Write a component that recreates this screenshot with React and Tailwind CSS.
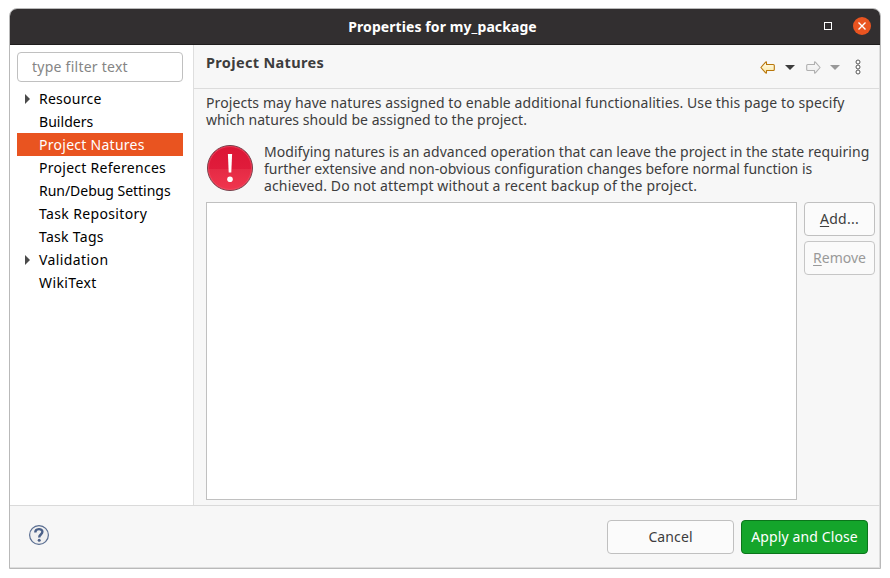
import React from "react";

const natures = [
  { label: "Resource", expandable: true, spacing: "tracking-[0.25px]" },
  { label: "Builders", spacing: "tracking-[0.05px]" },
  { label: "Project Natures", selected: true, spacing: "tracking-[0.27px]" },
  { label: "Project References", spacing: "tracking-[0.28px]" },
  { label: "Run/Debug Settings", spacing: "tracking-[-0.03px]" },
  { label: "Task Repository", spacing: "tracking-[0.36px]" },
  { label: "Task Tags", spacing: "tracking-[0.3px]" },
  { label: "Validation", expandable: true, spacing: "tracking-[0.4px]" },
  { label: "WikiText", spacing: "tracking-[0.4px]" },
];

function TitleBar() {
  return (
    <header className="flex h-9 shrink-0 items-center border-b border-[#1f1d1d] bg-[#322f30] pr-[9px] text-white">
      <h1 className="flex-1 pl-[51px] text-center text-[14px] font-bold tracking-[0.09px]">Properties for my_package</h1>
      <div className="flex w-[47px] items-center justify-between">
        <svg className="-mt-px" width="8" height="8" viewBox="0 0 8 8" fill="none" stroke="currentColor" shapeRendering="crispEdges">
          <rect x=".5" y=".5" width="7" height="7" />
        </svg>
        <svg className="-mt-px" width="18" height="18" viewBox="0 0 18 18">
          <circle cx="9" cy="9" r="9" fill="#e95420" />
          <path d="M5.5 5.5l7 7M12.5 5.5l-7 7" stroke="#fff" strokeWidth="1.4" />
        </svg>
      </div>
    </header>
  );
}

function Sidebar() {
  return (
    <aside className="w-[184px] shrink-0 border-r border-[#dedede] bg-white px-[7px] pt-[7px]">
      <input
        placeholder="type filter text"
        className="block h-[30px] w-[166px] rounded-[4px] border border-[#c0c0c0] bg-white px-[14px] pb-[2px] text-[14px] tracking-[0.25px] text-[#333] placeholder:text-[#858585]"
      />
      <ul className="mt-[5px] w-[166px] text-[14px] leading-[23px]">
        {natures.map((n) => (
          <li
            key={n.label}
            className={`flex h-[23px] items-center whitespace-nowrap pl-[8px] ${n.selected ? "bg-[#e95420] text-white" : "text-black"}`}
          >
            <span className="w-[14px] shrink-0">
              {n.expandable && (
                <svg width="5" height="10" viewBox="0 0 5 10">
                  <path d="M0 0l5 5-5 5z" fill="#4b4b4b" />
                </svg>
              )}
            </span>
            <span className={n.spacing}>{n.label}</span>
          </li>
        ))}
      </ul>
    </aside>
  );
}

function Arrow({ id, className, stroke, from, to }) {
  return (
    <svg className={className} width="15" height="13" viewBox="0 0 15 13">
      <linearGradient id={id} x1="0" y1="0" x2="0" y2="1">
        <stop offset="0" stopColor={from} />
        <stop offset="1" stopColor={to} />
      </linearGradient>
      <path d="M.9 6.5L5.6 1.1Q6.5.4 6.5 1.5V3.5h6.8q1 0 1 1v4q0 1-1 1H6.5v2q0 1.1-.9.4z" fill={`url(#${id})`} stroke={stroke} strokeWidth="1.1" strokeLinejoin="round" />
    </svg>
  );
}

function Caret({ color }) {
  return (
    <svg width="10" height="5" viewBox="0 0 10 5">
      <path d="M0 0h10L5 5z" fill={color} />
    </svg>
  );
}

function PageHeader() {
  return (
    <div className="flex h-11 shrink-0 items-start justify-between border-b border-[#dcdcdc] pl-3">
      <h2 className="mt-[8px] text-[14.5px] font-bold leading-[18px] tracking-[0.33px] text-[#3d3d3d]">Project Natures</h2>
      <div className="mt-[14px] flex h-4 items-center pr-[19px]">
        <Arrow id="back" stroke="#b8760a" from="#fffdf0" to="#fbe6a0" />
        <span className="ml-[10px] mr-[11px] flex"><Caret color="#3c3c3c" /></span>
        <Arrow id="forward" className="-scale-x-100" stroke="#b0b0b0" from="#fafafa" to="#ececec" />
        <span className="ml-[9px] flex"><Caret color="#999" /></span>
        <svg className="ml-[15px]" width="6" height="16" viewBox="0 0 6 16" fill="#fff" stroke="#555">
          <circle cx="3" cy="3" r="2" />
          <circle cx="3" cy="8" r="2" />
          <circle cx="3" cy="13" r="2" />
        </svg>
      </div>
    </div>
  );
}

function ErrorIcon() {
  return (
    <svg width="48" height="48" viewBox="0 0 48 48" className="shrink-0">
      <linearGradient id="alert" x1="0" y1="0" x2="0" y2="1">
        <stop offset="0" stopColor="#dc1535" />
        <stop offset=".52" stopColor="#e01c3b" />
        <stop offset=".53" stopColor="#e52b45" />
        <stop offset="1" stopColor="#f1354e" />
      </linearGradient>
      <circle cx="24" cy="24" r="22.5" fill="url(#alert)" stroke="#74404a" />
      <circle cx="24" cy="24" r="21.5" fill="none" stroke="#f0566c" strokeOpacity=".6" />
      <path d="M21.9 10h4.2l-.8 18.5h-2.6z" fill="#fff" />
      <circle cx="24" cy="35.2" r="2.8" fill="#fff" />
    </svg>
  );
}

export default function App() {
  return (
    <div className="h-[578px] w-[890px] bg-white pl-[9px] pt-[8px] font-['Noto_Sans',sans-serif]">
      <div className="flex h-[561px] w-[872px] flex-col overflow-hidden rounded-t-[8px] border border-[#b9b9b9] bg-[#f7f7f7] text-[#3d3d3d] shadow-[inset_-1px_-1px_0_#dedede]">
        <TitleBar />
        <div className="flex h-[460px] shrink-0">
          <Sidebar />
          <main className="flex min-w-0 flex-1 flex-col">
            <PageHeader />
            <div className="flex flex-col whitespace-nowrap pl-3 text-[14px] leading-[17px]">
              <div className="mt-[5px]">
                <p className="tracking-[0.09px]">Projects may have natures assigned to enable additional functionalities. Use this page to specify</p>
                <p className="tracking-[0.04px]">which natures should be assigned to the project.</p>
              </div>
              <div className="mt-[15px] flex h-[59px]">
                <div className="mt-px"><ErrorIcon /></div>
                <div className="ml-[10px]">
                  <p className="tracking-[0.05px]">Modifying natures is an advanced operation that can leave the project in the state requiring</p>
                  <p className="tracking-[0.01px]">further extensive and non-obvious configuration changes before normal function is</p>
                  <p className="tracking-[0.14px]">achieved. Do not attempt without a recent backup of the project.</p>
                </div>
              </div>
              <div className="flex gap-[7px]">
                <div className="h-[298px] w-[591px] border border-[#c0c0c0] bg-white" />
                <div className="flex w-[71px] flex-col gap-[5px]">
                  <button className="h-[34px] rounded-[4px] border border-[#c0c0c0] bg-[#fbfbfb] pb-[2px] tracking-[0.3px]"><u className="underline-offset-2">A</u>dd...</button>
                  <button className="h-[34px] rounded-[4px] border border-[#c6c6c6] bg-[#fafafa] pb-[2px] text-[#999]"><u className="underline-offset-2">R</u>emove</button>
                </div>
              </div>
            </div>
          </main>
        </div>
        <footer className="flex flex-1 items-start border-t border-[#dadada] pl-[18px] pr-[12px] pt-[14px] text-[14px]">
          <svg className="mt-[4px]" width="22" height="22" viewBox="0 0 22 22">
            <circle cx="11" cy="11" r="9.4" fill="#f0f0f0" stroke="#596d91" strokeWidth="1.2" />
            <path d="M7.3 8.5C7.2 4.3 14.4 4 14.4 7.8c0 2.7-3.2 2.7-3.2 5.6" fill="none" stroke="#4b6088" strokeWidth="2.4" />
            <circle cx="11.2" cy="16.3" r="1.5" fill="#4b6088" />
          </svg>
          <div className="ml-auto flex gap-[7px]">
            <button className="h-[34px] w-[127px] rounded-[4px] border border-[#c0c0c0] bg-[#fbfbfb] pb-[2px] tracking-[0.1px]">Cancel</button>
            <button className="h-[34px] w-[127px] whitespace-nowrap rounded-[4px] border border-[#0b751b] bg-[#14a52b] pb-[2px] tracking-[0.12px] text-white">Apply and Close</button>
          </div>
        </footer>
      </div>
    </div>
  );
}
